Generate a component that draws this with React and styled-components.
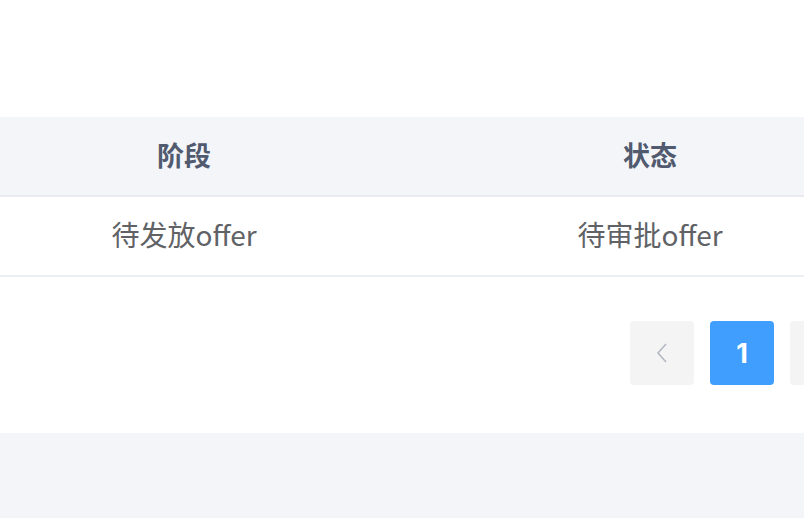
import React from "react";
import styled, { createGlobalStyle } from "styled-components";

const Global = createGlobalStyle`
  html, body { margin: 0; padding: 0; background: #fff; }
  body { font-family: "Noto Sans CJK SC", "Noto Sans", sans-serif; overflow: hidden; }
`;

const Page = styled.div`
  width: 804px;
  height: 518px;
  display: flex;
  flex-direction: column;
  overflow: hidden;
`;

const Card = styled.div`
  background: #fff;
  padding-top: 117px;
  display: flex;
  flex-direction: column;
`;

const Row = styled.div`
  display: grid;
  grid-template-columns: 368px 564px;
  height: 78px;
  background: ${(p) => (p.$head ? "#f3f5f9" : "#fff")};
  border-bottom: 2px solid ${(p) => (p.$head ? "#e9ebf1" : "#ebeef2")};
`;

const Cell = styled.div`
  display: flex;
  align-items: center;
  justify-content: center;
  padding-bottom: 4px;
  font-size: ${(p) => (p.$head ? "27px" : "28px")};
  font-weight: ${(p) => (p.$head ? 700 : 400)};
  color: ${(p) => (p.$head ? "#515a6e" : "#606266")};
  white-space: nowrap;
`;

const Pager = styled.div`
  display: flex;
  gap: 16px;
  padding: 44px 0 48px 630px;
  width: 900px;
`;

const PageBtn = styled.div`
  width: 64px;
  height: 64px;
  flex: none;
  border-radius: 4px;
  display: flex;
  align-items: center;
  justify-content: center;
  background: ${(p) => (p.$active ? "#409eff" : "#f4f4f5")};
  color: ${(p) => (p.$active ? "#fff" : "#c0c4cc")};
  font-family: "Inter", "Noto Sans", sans-serif;
  font-size: 27px;
  font-weight: 700;
`;

const Footer = styled.div`
  flex: 1;
  background: #f3f5f9;
`;

export default function App() {
  return (
    <Page>
      <Global />
      <Card>
        <Row $head>
          <Cell $head>阶段</Cell>
          <Cell $head>状态</Cell>
        </Row>
        <Row>
          <Cell>待发放offer</Cell>
          <Cell>待审批offer</Cell>
        </Row>
        <Pager>
          <PageBtn>
            <svg width="14" height="22" viewBox="0 0 14 22" fill="none">
              <path d="M11 2 L3 11 L11 20" stroke="#b4b8c0" strokeWidth="1.6" />
            </svg>
          </PageBtn>
          <PageBtn $active>1</PageBtn>
          <PageBtn>
            <svg width="14" height="22" viewBox="0 0 14 22" fill="none">
              <path d="M3 2 L11 11 L3 20" stroke="#b4b8c0" strokeWidth="1.6" />
            </svg>
          </PageBtn>
        </Pager>
      </Card>
      <Footer />
    </Page>
  );
}
